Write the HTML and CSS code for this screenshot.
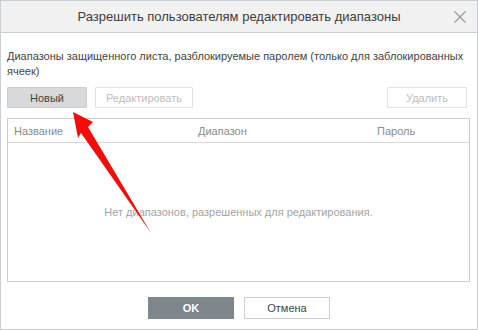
FILE: index.html
```html
<!DOCTYPE html>
<html lang="ru">
<head>
    <meta charset="UTF-8">
    <title>Разрешить пользователям редактировать диапазоны</title>
    <link rel="stylesheet" href="styles.css">
</head>
<body>
    <div class="dialog">
        <div class="dialog-header">
            <span class="dialog-title">Разрешить пользователям редактировать диапазоны</span>
            <svg class="close-btn" width="12" height="12" viewBox="0 0 12 12">
                <path d="M0.5 0.5 L11.5 11.5 M11.5 0.5 L0.5 11.5" stroke="#9a9a9a" stroke-width="1.2" fill="none"/>
            </svg>
        </div>

        <div class="dialog-body">
            <p class="description">Диапазоны защищенного листа, разблокируемые паролем (только для заблокированных ячеек)</p>

            <!-- Actions -->
            <div class="range-actions">
                <button class="btn btn-primary-gray">Новый</button>
                <button class="btn btn-edit" disabled>Редактировать</button>
                <button class="btn btn-right" disabled>Удалить</button>
            </div>

            <!-- Ranges list -->
            <div class="range-table">
                <div class="range-head">
                    <span>Название</span>
                    <span>Диапазон</span>
                    <span>Пароль</span>
                </div>
                <div class="range-empty">Нет диапазонов, разрешенных для редактирования.</div>
            </div>
        </div>

        <div class="dialog-footer">
            <button class="btn-ok">OK</button>
            <button class="btn-cancel">Отмена</button>
        </div>

        <svg class="arrow" width="478" height="330" viewBox="0 0 478 330">
            <polygon points="73,112 93,122 88,127 151,233 81,133 78,138" fill="#f20d0d"/>
        </svg>
    </div>
</body>
</html>
```

FILE: styles.css
```css
body {
    margin: 0;
    font-family: "Liberation Sans", Arial, sans-serif;
    background: #fff;
}

.dialog {
    position: relative;
    width: 478px;
    height: 330px;
    box-sizing: border-box;
    border: 1px solid #c6ced8;
    background: #fff;
    display: flex;
    flex-direction: column;
}

.dialog-header {
    height: 31px;
    background: #f1f1f1;
    border-bottom: 1px solid #c6ced8;
    display: flex;
    align-items: center;
    justify-content: center;
    position: relative;
}

.dialog-title {
    font-size: 13px;
    color: #3d3d3d;
}

.close-btn {
    position: absolute;
    right: 11px;
    top: 10px;
}

.dialog-body {
    padding: 16px 7px 0 6px;
    flex: 1;
}

.description {
    margin: 0;
    font-size: 11px;
    line-height: 15px;
    color: #444;
}

.range-actions {
    display: flex;
    gap: 8px;
    margin-top: 8px;
}

.btn {
    height: 21px;
    box-sizing: border-box;
    border: 1px solid #e1e1e1;
    background: #fff;
    color: #bdbdbd;
    font-family: inherit;
    font-size: 11px;
    padding: 0 11px;
    border-radius: 1px;
}

.btn-primary-gray {
    width: 80px;
    background: #d8d9da;
    border-color: #cdcdcd;
    color: #444;
}

.btn-edit {
    width: 98px;
    padding: 0;
}

.btn-right {
    margin-left: auto;
    margin-right: 3px;
    width: 80px;
}

.range-table {
    margin-top: 10px;
    height: 164px;
    box-sizing: border-box;
    border: 1px solid #cbcbcb;
    display: flex;
    flex-direction: column;
}

.range-head {
    height: 23px;
    border-bottom: 1px solid #d6d6d6;
    display: grid;
    grid-template-columns: 184px 179px 1fr;
    align-items: center;
    padding: 0 6px;
    font-size: 11px;
    color: #8a8a8a;
}

.range-empty {
    flex: 1;
    display: flex;
    align-items: center;
    justify-content: center;
    font-size: 11px;
    color: #a3a3a3;
}

.dialog-footer {
    display: flex;
    justify-content: center;
    gap: 10px;
    padding: 14px 0 10px;
}

.btn-ok,
.btn-cancel {
    width: 86px;
    height: 22px;
    box-sizing: border-box;
    font-family: inherit;
    font-size: 11px;
}

.btn-ok {
    background: #7d868c;
    border: none;
    color: #fff;
    font-weight: bold;
}

.btn-cancel {
    background: #fff;
    border: 1px solid #cfcfcf;
    color: #444;
}

.arrow {
    position: absolute;
    left: -1px;
    top: -1px;
    pointer-events: none;
}
```
